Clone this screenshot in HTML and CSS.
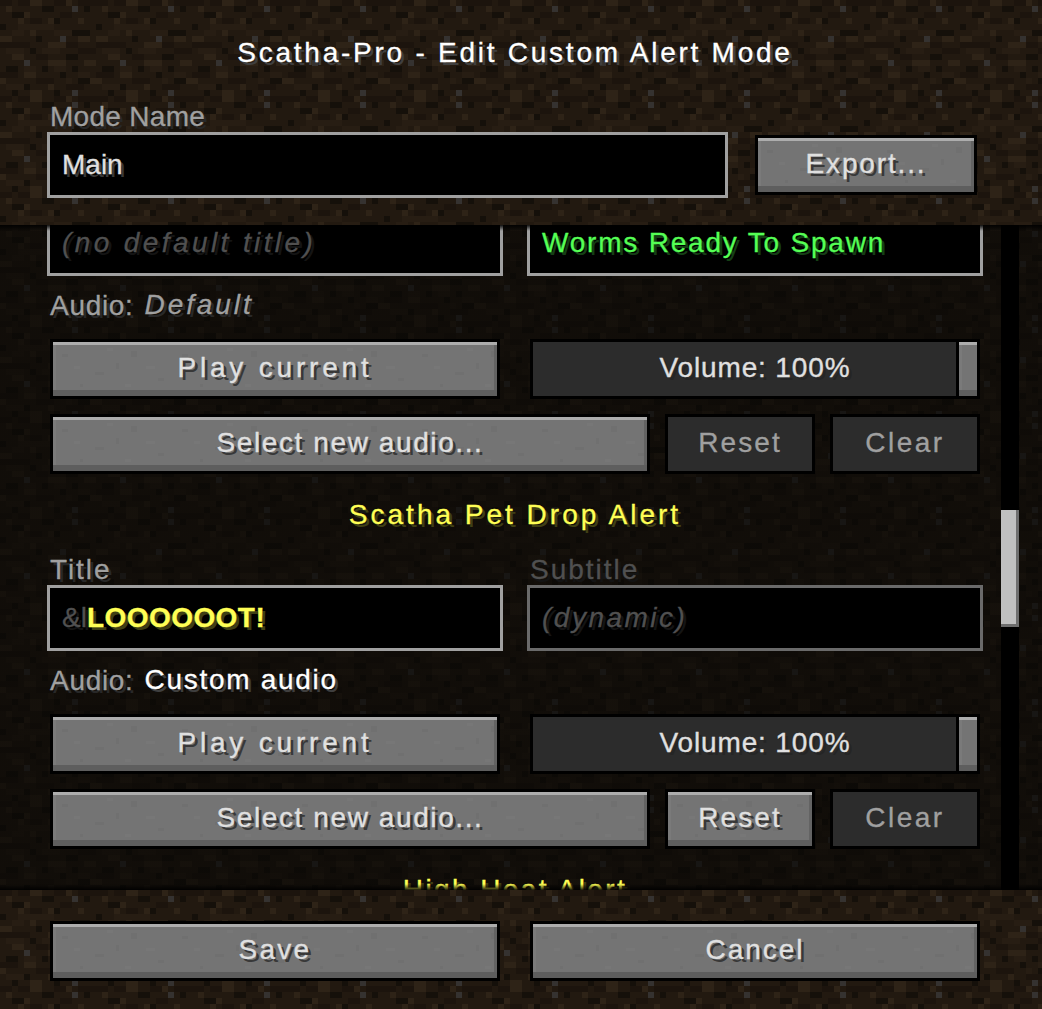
FILE: index.html
```html
<!DOCTYPE html>
<html lang="en">
<head>
<meta charset="utf-8">
<title>Scatha-Pro - Edit Custom Alert Mode</title>
<link rel="stylesheet" href="styles.css">
</head>
<body>
<div class="screen">
  <header class="top dirt">
    <h1 class="title">Scatha-Pro - Edit Custom Alert Mode</h1>
    <div class="name-row">
      <div class="name-field">
        <div class="label mode-name">Mode Name</div>
        <div class="input"><span class="val">Main</span></div>
      </div>
      <div class="btn export">Export...</div>
    </div>
  </header>
  <main class="list">
    <div class="scroll">
      <section class="block">
        <div class="fields">
          <div class="input"><span class="ph no-title">(no default title)</span></div>
          <div class="input"><span class="green">Worms Ready To Spawn</span></div>
        </div>
        <div class="audio"><span class="label-inline">Audio:</span><span class="audio-default">Default</span></div>
        <div class="controls">
          <div class="btn play">Play current</div>
          <div class="btn off volume">Volume: 100%<span class="handle"></span></div>
        </div>
        <div class="controls-2">
          <div class="btn select">Select new audio...</div>
          <div class="btn off reset">Reset</div>
          <div class="btn off clear">Clear</div>
        </div>
      </section>
      <section class="block">
        <div class="heading pet">Scatha Pet Drop Alert</div>
        <div class="fields">
          <div><div class="label title-label">Title</div><div class="input"><span class="code">&amp;l</span><span class="loot">LOOOOOOT!</span></div></div>
          <div><div class="label dim sub-label">Subtitle</div><div class="input dim-input"><span class="ph dynamic">(dynamic)</span></div></div>
        </div>
        <div class="audio"><span class="label-inline">Audio:</span><span class="audio-custom">Custom audio</span></div>
        <div class="controls">
          <div class="btn play">Play current</div>
          <div class="btn off volume">Volume: 100%<span class="handle"></span></div>
        </div>
        <div class="controls-2">
          <div class="btn select">Select new audio...</div>
          <div class="btn reset">Reset</div>
          <div class="btn off clear">Clear</div>
        </div>
      </section>
      <section class="block">
        <div class="heading heat">High Heat Alert</div>
      </section>
    </div>
    <div class="track"><div class="thumb"></div></div>
  </main>
  <footer class="bottom dirt">
    <div class="btn save">Save</div>
    <div class="btn cancel">Cancel</div>
  </footer>
</div>
</body>
</html>
```

FILE: styles.css
```css
* { box-sizing: border-box; }
html, body { margin: 0; padding: 0; background: #000; }
:root {
  --dirt: url("data:image/svg+xml,%3Csvg xmlns='http://www.w3.org/2000/svg' viewBox='0 0 16 16' width='96' height='96' shape-rendering='crispEdges'%3E%3Crect width='16' height='16' fill='%23221910'/%3E%3Cpath fill='%23271d13' d='M3 4h3v1h-3zM6 4h3v1h-3zM9 5h3v1h-3zM2 5h2v1h-2zM1 8h3v1h-3zM7 8h3v1h-3zM4 11h2v1h-2zM9 11h2v1h-2zM13 12h2v1h-2zM1 14h3v1h-3zM11 13h1v1h-1z'/%3E%3Cpath fill='%231c140d' d='M0 0h2v1h-2zM3 0h2v1h-2zM9 0h2v1h-2zM13 0h3v1h-3zM10 2h2v1h-2zM5 3h2v1h-2zM0 7h3v1h-3zM11 7h2v1h-2zM3 7h2v1h-2zM13 8h3v1h-3zM6 9h2v1h-2zM0 12h3v1h-3zM11 14h3v1h-3zM6 13h3v1h-3z'/%3E%3Cpath fill='%232e2317' d='M5 0h2v1h-2zM11 0h1v1h-1zM1 1h1v1h-1zM4 2h1v1h-1zM3 3h1v1h-1zM8 3h1v1h-1zM13 3h1v1h-1zM5 5h1v1h-1zM0 6h2v1h-2zM13 6h2v1h-2zM8 7h3v1h-3zM2 9h2v1h-2zM8 10h3v1h-3zM14 10h2v1h-2zM4 12h2v1h-2zM0 13h1v1h-1zM15 13h1v1h-1zM8 14h1v1h-1zM5 15h2v1h-2z'/%3E%3Cpath fill='%2315100a' d='M2 2h2v1h-2zM7 1h2v1h-2zM12 5h3v1h-3zM6 6h1v1h-1zM11 9h2v1h-2zM9 3h1v1h-1zM14 1h1v1h-1zM10 12h1v1h-1zM1 11h2v1h-2zM5 8h1v1h-1zM13 13h2v1h-2zM0 4h1v1h-1zM7 11h1v1h-1zM4 14h1v1h-1zM12 11h1v1h-1zM9 15h1v1h-1zM2 15h1v1h-1z'/%3E%3Cpath fill='%23353230' d='M12 1h1v1h-1zM10 6h1v1h-1zM4 10h1v1h-1zM12 15h1v1h-1z'/%3E%3C/svg%3E");
  --noise: url("data:image/svg+xml,%3Csvg xmlns='http://www.w3.org/2000/svg' width='120' height='54' shape-rendering='crispEdges'%3E%3Cg fill='%23000' fill-opacity='.035'%3E%3Crect x='9' y='12' width='6' height='3'/%3E%3Crect x='42' y='30' width='9' height='3'/%3E%3Crect x='78' y='9' width='6' height='6'/%3E%3Crect x='105' y='36' width='6' height='3'/%3E%3Crect x='27' y='42' width='3' height='3'/%3E%3Crect x='63' y='21' width='3' height='6'/%3E%3C/g%3E%3Cg fill='%23fff' fill-opacity='.025'%3E%3Crect x='21' y='24' width='6' height='3'/%3E%3Crect x='54' y='6' width='6' height='3'/%3E%3Crect x='93' y='24' width='9' height='3'/%3E%3Crect x='72' y='42' width='6' height='3'/%3E%3C/g%3E%3C/svg%3E");
}
body {
  font-family: "Liberation Sans", Arial, sans-serif;
  font-size: 28px;
  letter-spacing: 1.5px;
  line-height: 30px;
  -webkit-text-stroke: 0.3px;
}
.screen { width: 1042px; height: 1009px; display: flex; flex-direction: column; overflow: hidden; }
.dirt { background: var(--dirt) 0 0 / 96px 96px; }

/* header */
.top { height: 225px; flex: none; padding: 38px 47px 0; position: relative; z-index: 1; }
.title {
  margin: 0 0 34px -9px; height: 30px; font: inherit; letter-spacing: 2.75px; color: #fff; text-align: center;
  text-shadow: 3px 3px 0 #3f3f3f; width: 954px;
}
.name-row { display: flex; align-items: flex-start; gap: 27px; }
.name-field { width: 681px; }
.export { width: 222px; margin-top: 33px; letter-spacing: 1.85px; }

/* fields */
.label { height: 30px; padding-left: 3px; color: #a0a0a0; text-shadow: 3px 3px 0 #282828; }
.label.dim { color: #505050; text-shadow: 3px 3px 0 #141414; }
.mode-name { letter-spacing: 0.3px; }
.title-label { letter-spacing: 1.9px; }
.sub-label { letter-spacing: 2px; }
.input { height: 66px; border: 3px solid #a0a0a0; background: #000; padding: 0 12px; line-height: 60px; white-space: nowrap; }
.dim-input { border-color: #6a6a6a; }
.val { color: #e0e0e0; letter-spacing: 0; text-shadow: 3px 3px 0 #383838; }
.ph { color: #505050; font-style: italic; text-shadow: 3px 3px 0 #141414; }
.no-title { letter-spacing: 3.4px; }
.dynamic { letter-spacing: 2.5px; }
.green { color: #55ff55; letter-spacing: 1.8px; text-shadow: 3px 3px 0 #153f15; }
.code { color: #505050; text-shadow: 3px 3px 0 #141414; letter-spacing: 0; }
.loot { color: #ffff55; font-weight: 700; letter-spacing: 0.45px; text-shadow: 3px 3px 0 #3f3f15; }

/* list */
.list { flex: 1; min-height: 0; display: flex; position: relative; overflow: hidden;
  background: linear-gradient(rgba(8,7,5,.65), rgba(8,7,5,.65)), var(--dirt) 0 0 / 96px 96px; }
.list::before, .list::after { content: ""; position: absolute; left: 0; right: 0; height: 6px; z-index: 2; }
.list::before { top: 0; background: linear-gradient(rgba(0,0,0,.9), transparent); }
.list::after { bottom: 0; background: linear-gradient(transparent, rgba(0,0,0,.9)); }
.scroll { width: 1001px; flex: none; margin-top: -15px; padding-left: 47px; }
.block { width: 936px; padding-bottom: 26px; }
.heading { height: 30px; margin-bottom: 25px; text-align: center; color: #ffff55; text-shadow: 3px 3px 0 #3f3f15; }
.pet { letter-spacing: 3px; }
.heat { letter-spacing: 2.4px; }
.fields { display: grid; grid-template-columns: 456px 456px; gap: 24px; }
.audio { height: 63px; line-height: 60px; padding-left: 3px; display: flex; gap: 11px; }
.label-inline { color: #a0a0a0; letter-spacing: 0.7px; text-shadow: 3px 3px 0 #282828; }
.audio-default { color: #a0a0a0; font-style: italic; letter-spacing: 2.9px; position: relative; top: -1px; text-shadow: 3px 3px 0 #282828; }
.audio-custom { color: #fff; letter-spacing: 1.7px; position: relative; top: -1px; text-shadow: 3px 3px 0 #3f3f3f; }
.controls { display: grid; grid-template-columns: 450px 450px; gap: 30px; padding-left: 3px; margin-bottom: 15px; }
.controls-2 { display: grid; grid-template-columns: 600px 150px 150px; gap: 15px; padding-left: 3px; }

/* buttons */
.btn {
  height: 60px; border: 3px solid #000; text-align: center; line-height: 52px; color: #e0e0e0; white-space: nowrap;
  text-shadow: 3px 3px 0 #383838;
  background: var(--noise), #747474;
  box-shadow: inset 0 3px 0 #adadad, inset 0 -6px 0 #5e5e5e, inset 3px 0 0 #7a7a7a, inset -3px 0 0 #636363;
}
.btn.off {
  color: #a0a0a0; text-shadow: none; background: #2c2c2c; box-shadow: none;
}
.play { letter-spacing: 3.8px; }
.select { letter-spacing: 1.6px; }
.reset { letter-spacing: 2.1px; }
.clear { letter-spacing: 2.5px; }
.save { letter-spacing: 2.25px; }
.cancel { letter-spacing: 2px; }
.btn.volume { position: relative; color: #e0e0e0; letter-spacing: 0.85px; text-shadow: 3px 3px 0 #252525; }
.handle {
  position: absolute; right: 0; top: 0; bottom: 0; width: 21px; border-left: 3px solid #000; background: #747474;
  box-shadow: inset 0 3px 0 #adadad, inset 0 -6px 0 #5e5e5e, inset 3px 0 0 #7a7a7a;
}

/* scrollbar */
.track { width: 18px; flex: none; background: #000; }
.thumb { width: 18px; height: 117px; margin-top: 285px; background: #c0c0c0; box-shadow: inset -3px -3px 0 #6e6e6e; }

/* footer */
.bottom { height: 119px; flex: none; padding: 31px 62px 0 50px; display: grid; grid-template-columns: 450px 450px; gap: 30px; align-content: start; position: relative; z-index: 1; }
```
